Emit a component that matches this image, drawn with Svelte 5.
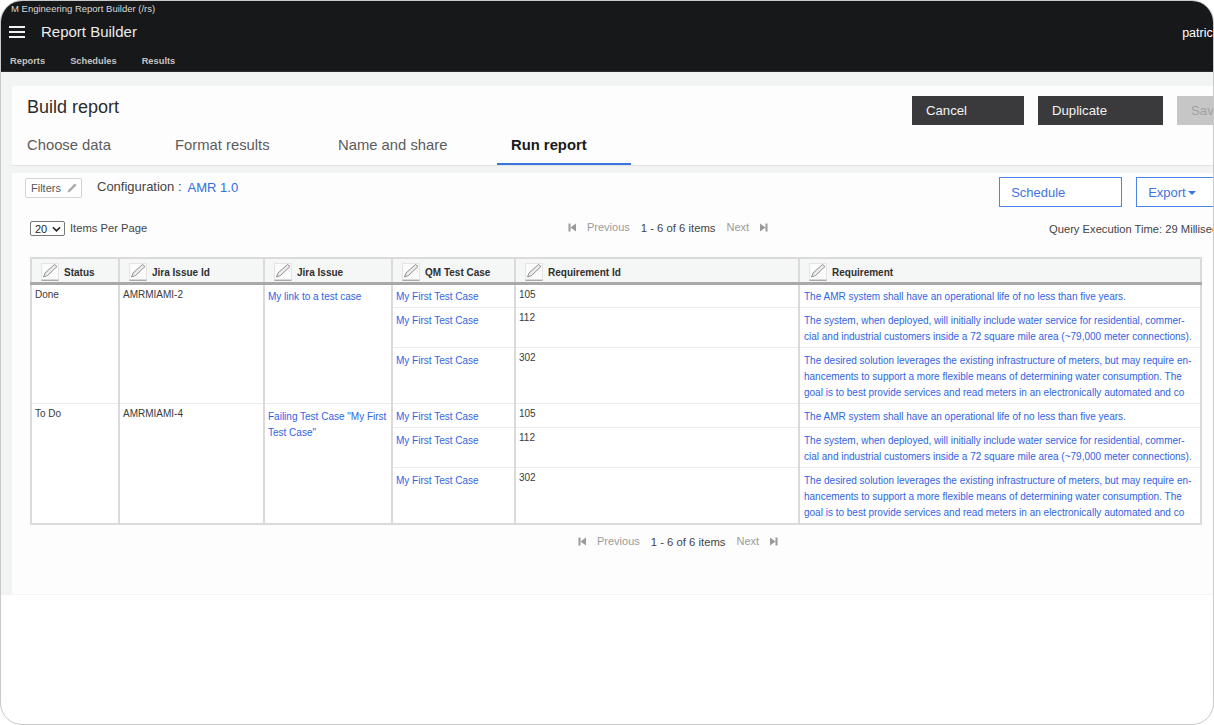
<script lang="ts">
  const nav = ["Reports", "Schedules", "Results"];
  const tabs = ["Choose data", "Format results", "Name and share", "Run report"];
  const columns = ["Status", "Jira Issue Id", "Jira Issue", "QM Test Case", "Requirement Id", "Requirement"];

  const requirements = [
    { id: "105", h: 24, lines: ["The AMR system shall have an operational life of no less than five years."] },
    {
      id: "112",
      h: 40,
      lines: [
        "The system, when deployed, will initially include water service for residential, commer-",
        "cial and industrial customers inside a 72 square mile area (~79,000 meter connections).",
      ],
    },
    {
      id: "302",
      h: 56,
      lines: [
        "The desired solution leverages the existing infrastructure of meters, but may require en-",
        "hancements to support a more flexible means of determining water consumption. The",
        "goal is to best provide services and read meters in an electronically automated and co",
      ],
    },
  ];

  const issues = [
    { status: "Done", key: "AMRMIAMI-2", title: "My link to a test case" },
    { status: "To Do", key: "AMRMIAMI-4", title: 'Failing Test Case "My First Test Case"' },
  ];
</script>

{#snippet pencil()}
  <svg class="pencil" viewBox="0 0 18 18" aria-hidden="true">
    <rect x="0.5" y="0.5" width="17" height="17" fill="#fbfbfb" stroke="#e4e4e4" />
    <path d="M2.5 14 L4 10 L13.5 1.5 L16 3.5 L6.5 12.5 Z" fill="#ececec" stroke="#858585" stroke-width="0.9" />
    <path d="M0.5 17.2 H17.5" stroke="#8f8f8f" stroke-width="1" />
  </svg>
{/snippet}

{#snippet pager()}
  <svg class="skip" viewBox="0 0 8 9" aria-hidden="true"><path d="M0.5 0.5H2.5V8.5H0.5ZM8 0.5V8.5L2.5 4.5Z" /></svg>
  <span class="pager-link prev">Previous</span>
  <span class="pager-count">1 - 6 of 6 items</span>
  <span class="pager-link next">Next</span>
  <svg class="skip" viewBox="0 0 8 9" aria-hidden="true"><path d="M7.5 0.5H5.5V8.5H7.5ZM0 0.5V8.5L5.5 4.5Z" /></svg>
{/snippet}

<div class="frame">
  <header class="topbar">
    <div class="window-title">M Engineering Report Builder (/rs)</div>
    <div class="brand-row">
      <span class="burger"><i></i><i></i><i></i></span>
      <span class="brand">Report Builder</span>
      <span class="user">patrick</span>
    </div>
    <nav class="nav">
      {#each nav as item}
        <span>{item}</span>
      {/each}
    </nav>
  </header>

  <main class="content">
    <section class="builder">
      <div class="builder-head">
        <h1>Build report</h1>
        <div class="actions">
          <button class="dark cancel">Cancel</button>
          <button class="dark duplicate">Duplicate</button>
          <button class="save">Save</button>
        </div>
      </div>
      <div class="tabs">
        {#each tabs as tab, i}
          <div class="tab" class:active={i === 3}>{tab}</div>
        {/each}
      </div>
    </section>

    <section class="results">
      <div class="filter-row">
        <span class="filters">Filters
          <svg viewBox="0 0 12 12" aria-hidden="true"><path d="M1.5 10.5 L2.3 8 L8.8 1.5 L10.5 3.2 L4 9.7 Z" fill="#a9a9a9" /></svg>
        </span>
        <span class="config-label">Configuration :</span>
        <span class="config-value">AMR 1.0</span>
        <div class="result-actions">
          <button class="outline schedule">Schedule</button>
          <button class="outline export">Export<span class="caret"></span></button>
        </div>
      </div>

      <div class="pager-row">
        <div class="per-page">
          <span class="select">20
            <svg viewBox="0 0 10 6" aria-hidden="true"><path d="M1 1 L5 5 L9 1" fill="none" stroke="#222" stroke-width="1.8" /></svg>
          </span>
          Items Per Page
        </div>
        <div class="pager">{@render pager()}</div>
        <div class="query-time">Query Execution Time: 29 Milliseconds</div>
      </div>

      <table>
        <colgroup>
          <col style="width: 88px" />
          <col style="width: 145px" />
          <col style="width: 128px" />
          <col style="width: 123px" />
          <col style="width: 284px" />
          <col style="width: 402px" />
        </colgroup>
        <thead>
          <tr>
            {#each columns as col}
              <th><span class="th-inner">{@render pencil()}<span class="th-label">{col}</span></span></th>
            {/each}
          </tr>
        </thead>
        <tbody>
          {#each issues as issue}
            {#each requirements as req, i}
              <tr style="height: {req.h}px">
                {#if i === 0}
                  <td rowspan="3">{issue.status}</td>
                  <td rowspan="3">{issue.key}</td>
                  <td rowspan="3" class="link issue-link">{issue.title}</td>
                {/if}
                <td class="link">My First Test Case</td>
                <td class="req-id">{req.id}</td>
                <td class="link req-text">
                  {#each req.lines as line}
                    <div class="req-line">{line}</div>
                  {/each}
                </td>
              </tr>
            {/each}
          {/each}
        </tbody>
      </table>

      <div class="pager pager-bottom">{@render pager()}</div>
    </section>
  </main>
</div>

<style>
  :global(body) {
    margin: 0;
    background: #fff;
  }

  .frame {
    box-sizing: border-box;
    width: 1214px;
    height: 725px;
    border: 1px solid #c9c9c9;
    border-radius: 22px;
    overflow: hidden;
    background: #fff;
    font-family: "Liberation Sans", Arial, sans-serif;
    color: #333;
  }

  .topbar {
    height: 71px;
    box-sizing: border-box;
    background: #17181a;
    border-bottom: 1px solid #2e2e2e;
    color: #fff;
  }

  .window-title {
    box-sizing: border-box;
    height: 15px;
    padding: 1px 0 0 10px;
    font-size: 9.5px;
    line-height: 14px;
    color: #d8d8d8;
  }

  .brand-row {
    display: flex;
    align-items: center;
    height: 32px;
    padding-left: 8px;
    white-space: nowrap;
  }

  .burger {
    display: flex;
    flex-direction: column;
    gap: 3px;
    width: 16px;
  }

  .burger i {
    display: block;
    height: 2px;
    background: #f2f2f2;
  }

  .brand {
    margin: -1px 0 0 16px;
    font-size: 15px;
    color: #ececec;
  }

  .user {
    margin-left: auto;
    margin-right: -6px;
    padding-top: 2px;
    font-size: 12.5px;
  }

  .nav {
    display: flex;
    gap: 25px;
    padding: 8px 0 0 9px;
    font-size: 9.3px;
    font-weight: bold;
    color: #c4c4c4;
  }

  .content {
    box-sizing: border-box;
    height: 523px;
    padding: 14px 0 0 11px;
    background: #f2f3f3;
  }

  .builder {
    height: 80px;
    background: #fdfdfe;
    box-sizing: border-box;
    border-bottom: 1px solid #e3e4e4;
  }

  .builder-head {
    display: flex;
    height: 47px;
    padding: 10px 0 0 15px;
    box-sizing: border-box;
  }

  h1 {
    flex: none;
    width: 95px;
    margin: 0;
    font-size: 18px;
    font-weight: normal;
    line-height: 22px;
    white-space: nowrap;
    color: #2c2c2c;
  }

  .actions {
    display: flex;
    gap: 14px;
    margin-left: 790px;
    flex: none;
  }

  .actions button {
    height: 29px;
    border: 0;
    padding: 0 0 0 14px;
    text-align: left;
    font: 13.2px "Liberation Sans", Arial, sans-serif;
    color: #f4f4f4;
    flex: none;
  }

  .dark {
    background: #3a3a3c;
  }

  .cancel {
    width: 112px;
  }

  .duplicate {
    width: 125px;
  }

  .actions .save {
    width: 60px;
    background: #c6c6c6;
    color: #a2a2a2;
  }

  .tabs {
    display: grid;
    grid-template-columns: 148px 163px 173px 134px;
    height: 32px;
    padding-left: 1px;
  }

  .tab {
    padding: 3px 0 0 14px;
    font-size: 14.8px;
    line-height: 18px;
    color: #5c5c5c;
  }

  .tab.active {
    color: #1a1a1a;
    font-weight: bold;
    border-bottom: 2px solid #3b73e0;
  }

  .results {
    height: 421px;
    margin-top: 7px;
    background: #fdfdfe;
    box-sizing: border-box;
    padding: 5px 0 0 13px;
  }

  .filter-row {
    display: flex;
    align-items: flex-start;
    height: 41px;
    white-space: nowrap;
  }

  .filters {
    display: flex;
    flex: none;
    align-items: center;
    gap: 5px;
    box-sizing: border-box;
    width: 57px;
    height: 20px;
    padding-left: 5px;
    border: 1px solid #d4d4d4;
    border-radius: 2px;
    font-size: 11px;
    color: #555;
    background: #fff;
  }

  .filters svg {
    width: 12px;
    height: 12px;
  }

  .config-label {
    flex: none;
    margin-left: 15px;
    font-size: 13px;
    line-height: 18px;
    color: #444;
  }

  .config-value {
    flex: none;
    margin-left: 6px;
    font-size: 13px;
    line-height: 20px;
    color: #2f6fe4;
  }

  .result-actions {
    display: flex;
    gap: 14px;
    margin: -1px 0 0 761px;
    flex: none;
  }

  .outline {
    height: 30px;
    box-sizing: border-box;
    border: 1px solid #4b86e8;
    background: #fff;
    color: #3f74de;
    font: 13px "Liberation Sans", Arial, sans-serif;
    text-align: left;
    padding: 0 0 0 11px;
    flex: none;
  }

  .schedule {
    width: 123px;
  }

  .export {
    width: 90px;
  }

  .caret {
    display: inline-block;
    margin-left: 2px;
    vertical-align: 2px;
    border-left: 4px solid transparent;
    border-right: 4px solid transparent;
    border-top: 4px solid #3f74de;
  }

  .pager-row {
    display: grid;
    grid-template-columns: 538px 481px auto;
    height: 37px;
    padding: 1px 0 0 5px;
    white-space: nowrap;
  }

  .per-page {
    display: flex;
    align-items: flex-start;
    gap: 5px;
    font-size: 11.2px;
    line-height: 16px;
    color: #444;
  }

  .select {
    display: flex;
    align-items: center;
    justify-content: space-between;
    box-sizing: border-box;
    width: 35px;
    height: 15px;
    margin-top: 1px;
    padding: 0 3px 0 4px;
    border: 1px solid #777;
    border-radius: 2px;
    font-size: 11px;
    color: #222;
    background: #fff;
  }

  .select svg {
    width: 9px;
    height: 6px;
  }

  .pager {
    display: flex;
    align-items: flex-start;
    height: 16px;
    font-size: 11px;
    line-height: 15px;
    white-space: nowrap;
  }

  .pager-bottom {
    margin: 9px 0 0 553px;
  }

  .skip {
    width: 8px;
    height: 9px;
    margin-top: 3px;
    fill: #9a9a9a;
    flex: none;
  }

  .pager-link {
    color: #9b9b9b;
  }

  .prev {
    margin-left: 11px;
  }

  .next {
    margin-right: 11px;
  }

  .pager-count {
    margin: 1px 11px 0;
    font-size: 11.3px;
    color: #444;
  }

  .query-time {
    padding-top: 1px;
    font-size: 11.2px;
    line-height: 16px;
    color: #444;
  }

  table {
    table-layout: fixed;
    width: 1170px;
    margin-left: 5px;
    border-collapse: collapse;
    font-size: 10px;
    line-height: 16px;
    background: #fff;
    border: 2px solid #dadada;
  }

  th {
    height: 19px;
    padding: 4px 0 0 9px;
    background: #f5f6f6;
    border-left: 2px solid #dadada;
    border-bottom: 3px solid #a9a9a9;
    text-align: left;
    font-size: 10px;
    font-weight: bold;
    color: #2f2f2f;
    vertical-align: top;
  }

  .th-inner {
    display: flex;
    align-items: center;
    gap: 5px;
    white-space: nowrap;
  }

  .th-label {
    padding-top: 1px;
  }

  .pencil {
    width: 18px;
    height: 18px;
    flex: none;
  }

  td {
    padding: 2px 4px 0 3px;
    vertical-align: top;
    border-left: 2px solid #dadada;
    border-bottom: 1px solid #ececec;
    color: #3a3a3a;
    white-space: nowrap;
    overflow: hidden;
  }

  .link {
    padding-top: 5px;
    color: #2f64e2;
  }

  tbody tr:first-child .link {
    padding-top: 4px;
  }

  .issue-link {
    white-space: normal;
  }

  .req-text {
    padding-left: 4px;
  }

  .req-line {
    white-space: nowrap;
  }

  .req-id {
    padding-left: 3px;
  }
</style>
